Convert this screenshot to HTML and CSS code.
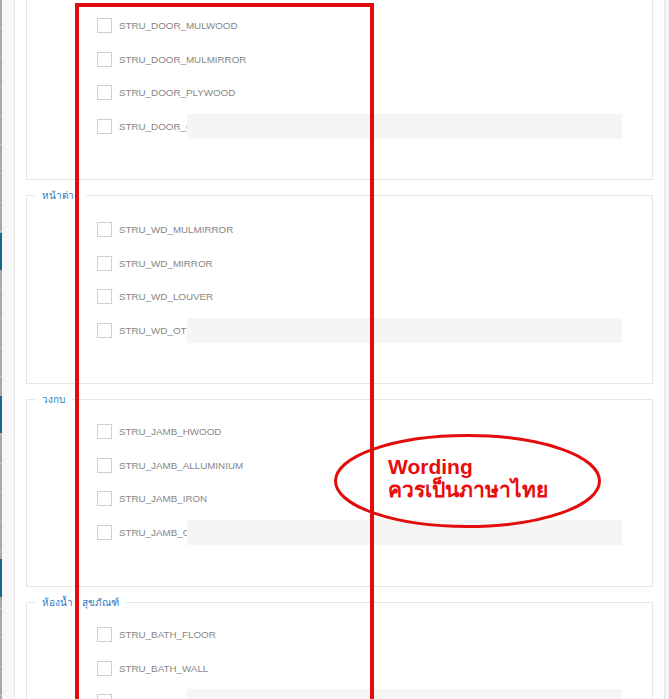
FILE: index.html
```html
<!DOCTYPE html>
<html lang="th">
<head>
<meta charset="utf-8">
<title>Structure options</title>
<link rel="stylesheet" href="styles.css">
</head>
<body>
<div class="page">
  <div class="sidebar"><div class="strip"></div></div>
  <main class="main">
    <div class="fs first">
      <div class="row"><span class="cb"></span><span class="lbl">STRU_DOOR_MULWOOD</span></div>
      <div class="row"><span class="cb"></span><span class="lbl">STRU_DOOR_MULMIRROR</span></div>
      <div class="row"><span class="cb"></span><span class="lbl">STRU_DOOR_PLYWOOD</span></div>
      <div class="row"><span class="cb"></span><span class="lbl cut">STRU_DOOR_OTHER</span><span class="inp"></span></div>
    </div>
    <div class="fs">
      <span class="legend">หน้าต่าง</span>
      <div class="row"><span class="cb"></span><span class="lbl">STRU_WD_MULMIRROR</span></div>
      <div class="row"><span class="cb"></span><span class="lbl">STRU_WD_MIRROR</span></div>
      <div class="row"><span class="cb"></span><span class="lbl">STRU_WD_LOUVER</span></div>
      <div class="row"><span class="cb"></span><span class="lbl cut">STRU_WD_OTHER</span><span class="inp"></span></div>
    </div>
    <div class="fs tight">
      <span class="legend">วงกบ</span>
      <div class="row"><span class="cb"></span><span class="lbl">STRU_JAMB_HWOOD</span></div>
      <div class="row"><span class="cb"></span><span class="lbl">STRU_JAMB_ALLUMINIUM</span></div>
      <div class="row"><span class="cb"></span><span class="lbl">STRU_JAMB_IRON</span></div>
      <div class="row"><span class="cb"></span><span class="lbl cut">STRU_JAMB_OTHER</span><span class="inp"></span></div>
    </div>
    <div class="fs tight">
      <span class="legend">ห้องน้ำ - สุขภัณฑ์</span>
      <div class="row"><span class="cb"></span><span class="lbl">STRU_BATH_FLOOR</span></div>
      <div class="row"><span class="cb"></span><span class="lbl">STRU_BATH_WALL</span></div>
      <div class="row"><span class="cb"></span><span class="lbl cut">STRU_BATH_OTHER</span><span class="inp"></span></div>
    </div>
  </main>
  <div class="rightbar"></div>
</div>
<div class="annot">
  <svg class="marks" width="669" height="699" viewBox="0 0 669 699">
    <rect x="77" y="5" width="295" height="800" fill="none" stroke="#e30c0c" stroke-width="4"/>
    <ellipse cx="467.5" cy="481" rx="132" ry="45.5" fill="none" stroke="#e30c0c" stroke-width="3"/>
  </svg>
  <div class="note">
    <div class="note-en">Wording</div>
    <div class="note-th">ควรเป็นภาษาไทย</div>
  </div>
</div>
</body>
</html>
```
FILE: styles.css
```css
* { box-sizing: border-box; }
html, body { margin: 0; padding: 0; background: #fff; overflow: hidden; }
body { font-family: "Liberation Sans", Arial, "Noto Sans", sans-serif; width: 669px; height: 699px; }

.page { display: flex; height: 699px; overflow: hidden; }

.sidebar {
  width: 15px;
  flex: none;
  background: #f7f7f7;
  border-right: 1px solid #e6e6e6;
  display: flex;
}
.strip {
  width: 2px;
  height: 100%;
  background:
    linear-gradient(to bottom,
      transparent 0 233px, #176a8c 233px 270px,
      transparent 270px 396px, #176a8c 396px 433px,
      transparent 433px 559px, #176a8c 559px 597px,
      transparent 597px),
    repeating-linear-gradient(to bottom, #a9a9a9 0 28px, #c4c4c4 28px 29px);
}

.main {
  flex: 1;
  padding: 0 11px;
  display: flex;
  flex-direction: column;
  gap: 15px;
  min-width: 0;
}

.rightbar {
  width: 5px;
  flex: none;
  background: #f5f5f5;
  border-left: 1px solid #e6e6e6;
}

.fs {
  position: relative;
  flex: none;
  height: 189px;
  border: 1px solid #e6e6e6;
  padding: 21px 30px 0 70px;
  display: flex;
  flex-direction: column;
  gap: 8.5px;
}
.fs.first { margin-top: -9px; }
.fs.tight { height: 188px; padding-top: 19px; }

.legend {
  position: absolute;
  top: -7px;
  left: 8px;
  padding: 0 7px;
  background: #fff;
  color: #1f78c6;
  font-size: 10px;
  line-height: 13px;
  font-family: "Liberation Sans", "Noto Sans", "DejaVu Sans", sans-serif;
}

.row {
  height: 25px;
  display: flex;
  align-items: center;
  flex: none;
}
.cb {
  width: 15px;
  height: 15px;
  border: 1px solid #d0d0d0;
  background: #fff;
  flex: none;
}
.lbl {
  margin-left: 7px;
  font-size: 9.8px;
  color: #868686;
  white-space: nowrap;
}
.lbl.cut {
  width: 68px;
  flex: none;
  overflow: hidden;
}
.inp {
  flex: 1;
  height: 25px;
  background: #f5f5f5;
}

.annot {
  position: absolute;
  left: 0;
  top: 0;
  width: 669px;
  height: 699px;
  pointer-events: none;
}
.marks { position: absolute; left: 0; top: 0; }
.note {
  position: absolute;
  left: 388px;
  top: 455px;
  color: #e80c0c;
  font-weight: bold;
  font-size: 21px;
  font-family: "Liberation Sans", Arial, "Noto Sans", sans-serif;
}
.note-en { line-height: 23px; }
.note-th { line-height: 23px; }
```
